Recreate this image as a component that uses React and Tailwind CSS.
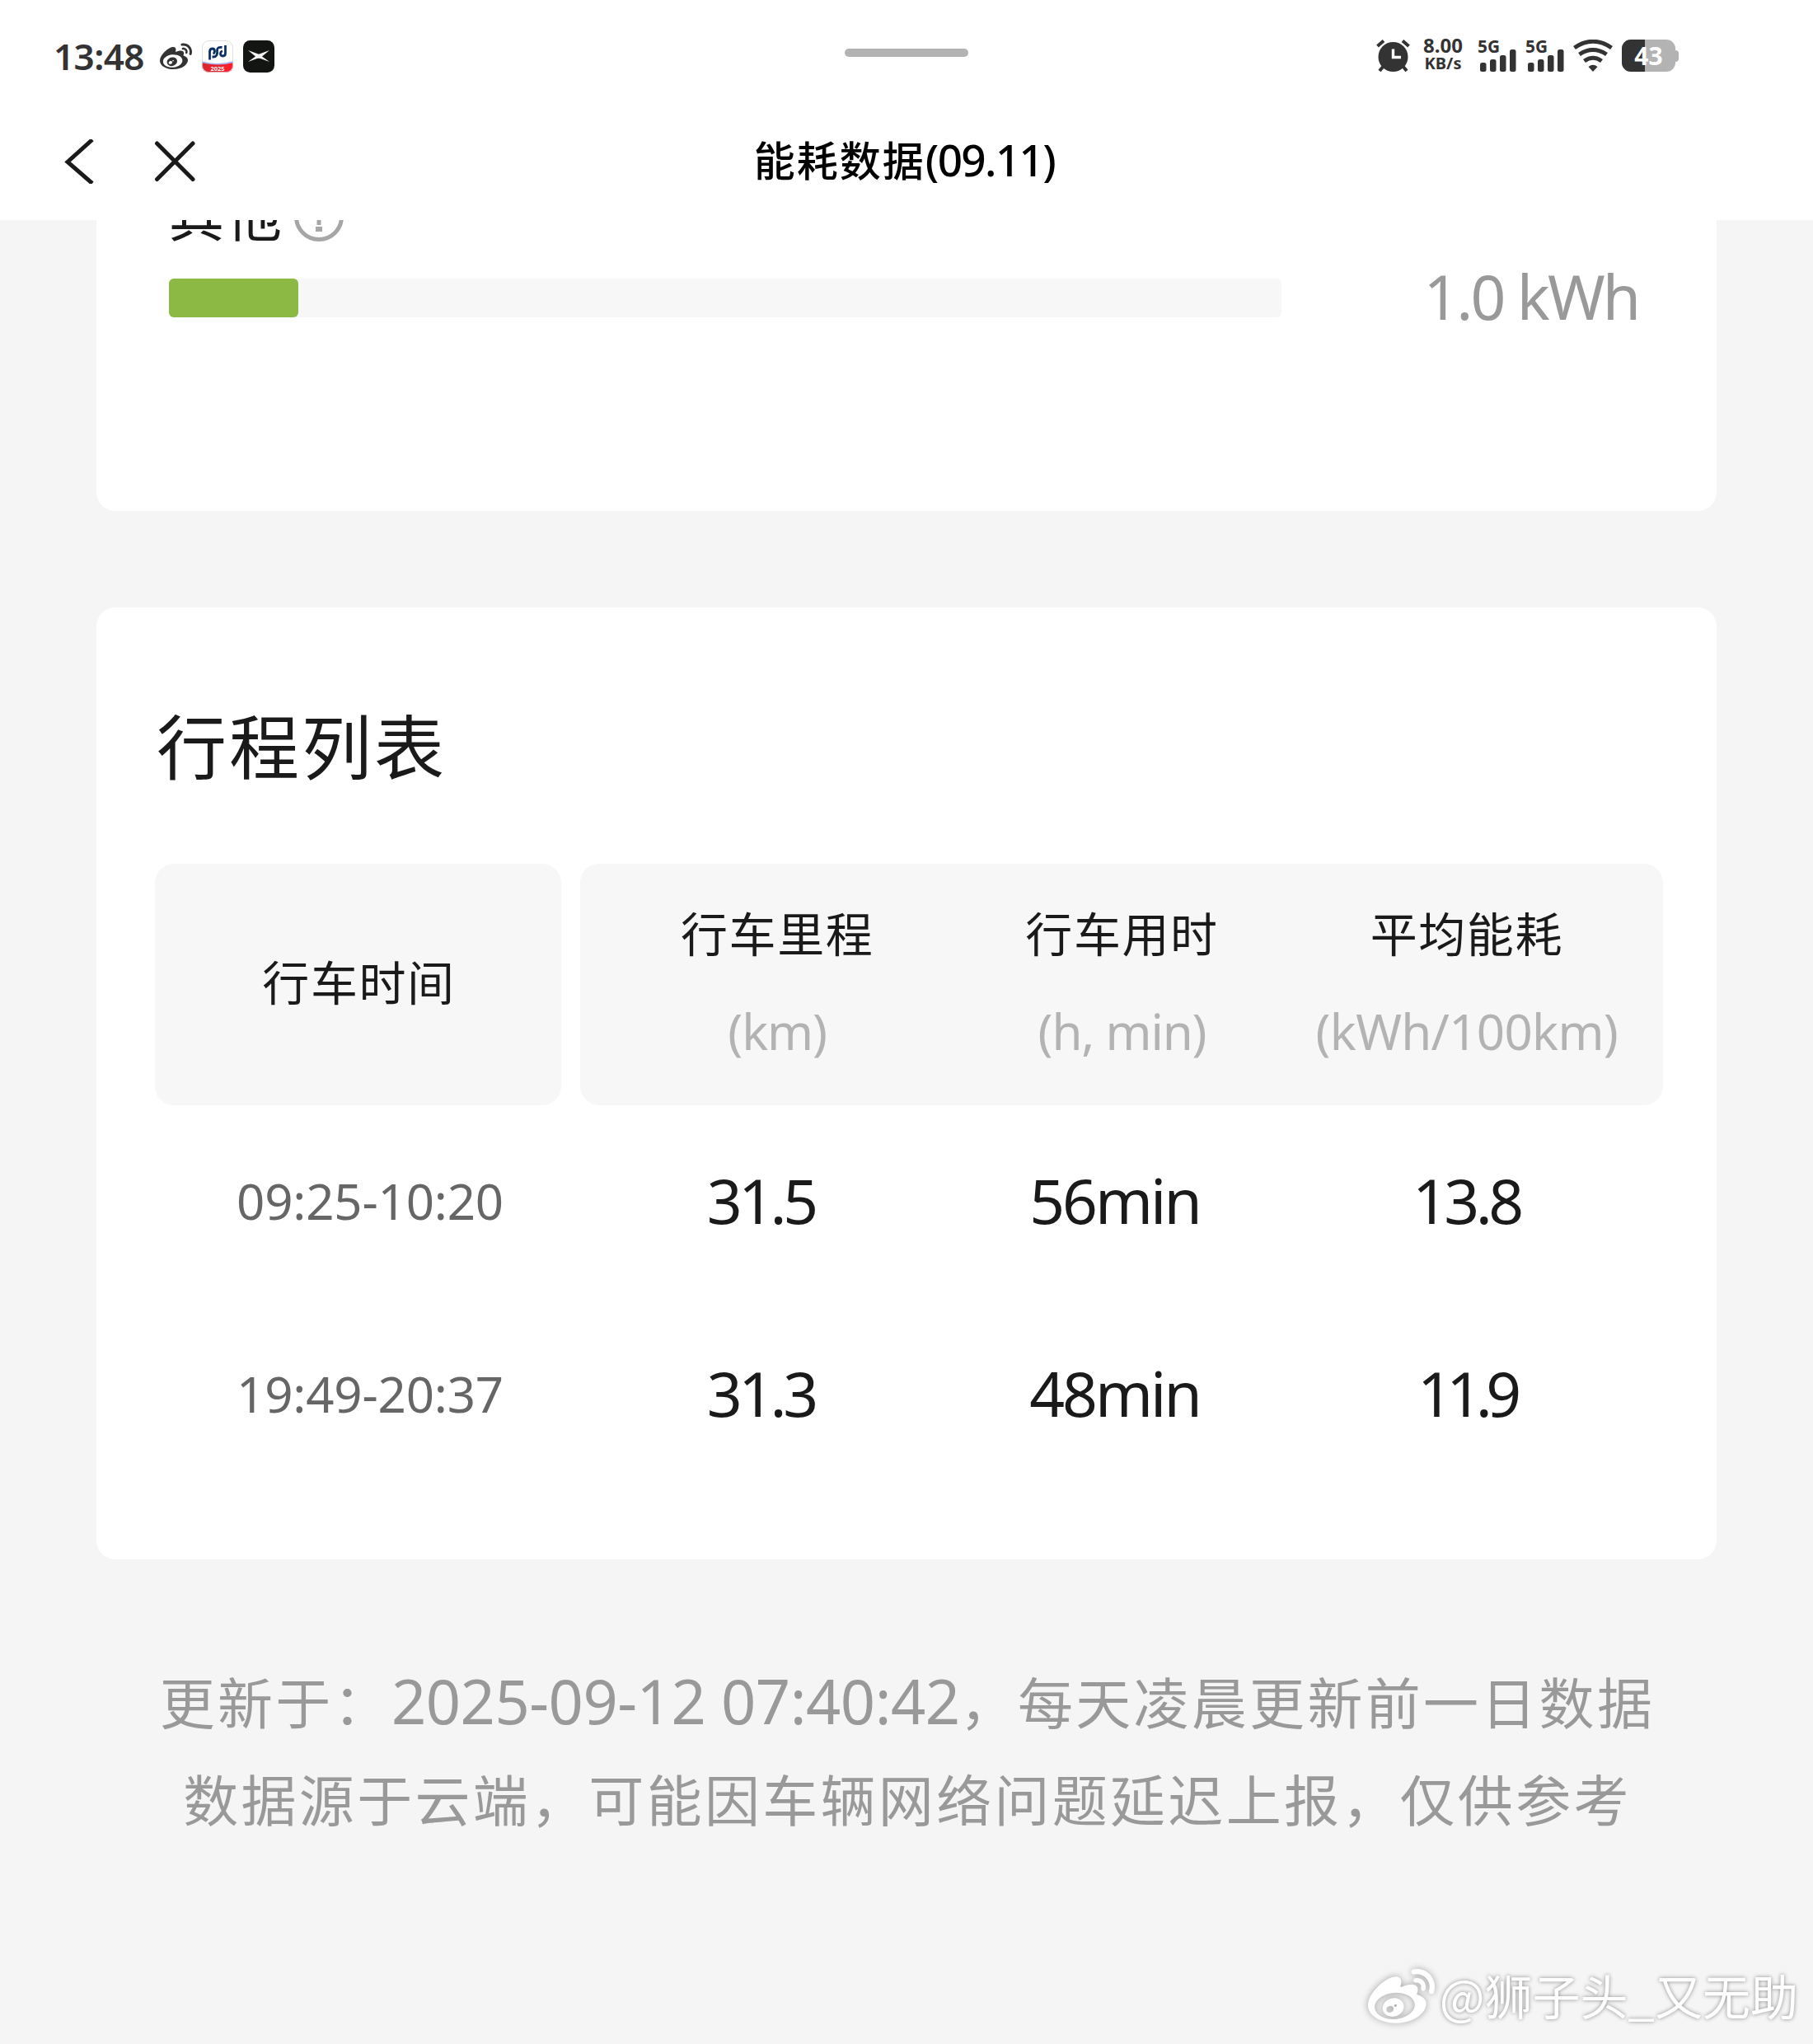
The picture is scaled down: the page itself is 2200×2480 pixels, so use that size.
import React from 'react'
import { FaWeibo } from 'react-icons/fa'

const columns = [
  { name: '行车里程', unit: '(km)', unitClass: 'tracking-[-1.1px]' },
  { name: '行车用时', unit: '(h, min)', unitClass: 'tracking-[-1.2px]' },
  { name: '平均能耗', unit: '(kWh/100km)', unitClass: 'tracking-[-0.7px]' },
]

const trips = [
  { time: '09:25-10:20', distance: '31.5', duration: '56min', average: '13.8', averageClass: 'tracking-[-4.5px]' },
  { time: '19:49-20:37', distance: '31.3', duration: '48min', average: '11.9', averageClass: 'tracking-[-7.5px]' },
]

const other = { value: 157, total: 1350, label: '1.0 kWh' }

function Signal() {
  return (
    <div className="w-[46px] h-[39px]">
      <svg width="46" height="39" viewBox="0 0 46 39" fill="currentColor" className="overflow-visible">
        <text x="-1" y="15.500" fontSize="21.500" fontWeight="700" textLength="27" lengthAdjust="spacingAndGlyphs">5G</text>
        <rect x="2" y="28" width="7.5" height="11" rx="2.5" />
        <rect x="14" y="24" width="7.5" height="15" rx="2.5" />
        <rect x="26" y="19" width="7.5" height="20" rx="2.5" />
        <rect x="38" y="12" width="7.5" height="27" rx="2.5" />
      </svg>
    </div>
  )
}

function Alarm() {
  return (
    <svg width="41" height="39" viewBox="0 0 41 39" fill="none">
      <circle cx="20.5" cy="21" r="18" fill="#333" />
      <path d="M1.500 8 L9 1.500 M39.500 8 L32 1.500" stroke="#333" strokeWidth="4" />
      <path d="M9 32 L4 38 M32 32 L37 38" stroke="#333" strokeWidth="4" />
      <path d="M20.5 11.5 V21.5 H30" stroke="#fff" strokeWidth="3.4" />
    </svg>
  )
}

function Wifi() {
  return (
    <svg width="48" height="39" viewBox="0 0 48 39" fill="none" stroke="#333" strokeWidth="5">
      <path d="M1.5 10 Q24 -5.5 46.500 10" />
      <path d="M7.500 18 Q24 7 40.500 18" />
      <path d="M13.500 26 Q24 18.500 34.500 26" />
      <path d="M18.500 33 Q24 28.500 29.500 33 L24 39 Z" fill="#333" stroke="none" />
    </svg>
  )
}

function Battery() {
  return (
    <div className="flex items-center">
      <div className="relative w-[65px] h-[39px] rounded-[11px] bg-[#b3b3b3] overflow-hidden">
        <div className="w-7 h-full bg-[#333]" />
        <span className="absolute inset-0 text-center text-[30px] leading-[39px] font-bold text-white">43</span>
      </div>
      <div className="w-[4px] h-[14px] rounded-r-[4px] bg-[#b3b3b3]" />
    </div>
  )
}

function StatusBar() {
  return (
    <div className="h-[136px] px-[65px] grid grid-cols-[1fr_150px_1fr] items-start text-[#333]">
      <div className="flex items-center pt-[48px] h-[88px]">
        <span className="w-[129px] text-[44px] leading-[40px] font-semibold tracking-[-0.6px]">13:48</span>
        <FaWeibo size={39} className="mt-[2px]" />
        <svg className="ml-[12px]" width="38" height="39" viewBox="0 0 38 39">
          <defs>
            <linearGradient id="badge" x1="0" y1="0" x2="1" y2="0">
              <stop offset="0" stopColor="#d9262b" />
              <stop offset="1" stopColor="#ff1e2c" />
            </linearGradient>
            <clipPath id="appShape"><rect width="38" height="39" rx="8.500" /></clipPath>
          </defs>
          <g clipPath="url(#appShape)">
            <rect width="38" height="39" fill="#fff" />
            <path d="M0 25 Q19 31 38 25 V32 H0 Z" fill="#a9b4f0" />
            <path d="M0 27 Q19 32 38 27 V39 H0 Z" fill="url(#badge)" />
          </g>
          <rect x="0.500" y="0.500" width="37" height="38" rx="8" fill="none" stroke="#d8d8d8" strokeWidth="0.800" />
          <g fill="none" stroke="#0d3166" strokeWidth="2.800">
            <path d="M9.500 23.500 V14 Q9.500 10 12.500 10 Q15.500 10 15.500 13 Q15.500 15.500 13.500 16" />
            <path d="M24.500 8.500 Q18.500 7.500 18.500 12 Q19.500 20 14 20 H12.500" />
            <path d="M28.500 6 V15.500 Q28.500 19 25.500 19 Q22.500 19 22.500 16 Q22.500 13.500 25 13" />
          </g>
          <text x="19" y="36.500" textAnchor="middle" fontSize="7.500" fontWeight="700" fill="#fff">2025</text>
        </svg>
        <svg className="ml-[12px]" width="38" height="39" viewBox="0 0 38 39">
          <rect width="38" height="39" rx="8.500" fill="#131513" />
          <path d="M6 12 L17 16 Q19 17 21 16 L32 12 L23 19.500 L32 26 L21 22 Q19 21.500 17 22 L6 26 L15 19.500 Z" fill="#f2f2f2" />
        </svg>
      </div>
      <div className="mt-[59px] h-[10px] rounded-full bg-[#b3b3b3]" />
      <div className="flex items-center justify-end pt-[48px] pr-[98px] h-[87px]">
        <Alarm />
        <div className="ml-[13px] w-[54px] text-center font-bold">
          <div className="text-[24px] leading-[20px] -mt-[2px]">8.00</div>
          <div className="text-[20px] leading-[24px]">KB/s</div>
        </div>
        <div className="ml-[16px] flex gap-[12px]">
          <Signal />
          <Signal />
        </div>
        <div className="ml-[11px]"><Wifi /></div>
        <div className="ml-[11px]"><Battery /></div>
      </div>
    </div>
  )
}

function NavBar() {
  return (
    <div className="h-[131px] px-[77px] grid grid-cols-[1fr_auto_1fr] items-start">
      <div className="flex pt-[33px]">
        <svg width="38" height="54" viewBox="0 0 38 54" fill="none" stroke="#1a1a1a" strokeWidth="5">
          <path d="M35 0.500 L5 27.500 L35 53.500" />
        </svg>
        <svg className="ml-[72px]" width="50" height="54" viewBox="0 0 50 54" fill="none" stroke="#1a1a1a" strokeWidth="5" strokeLinecap="round">
          <path d="M3.500 5 L47 48.500 M47 5 L3.500 48.500" />
        </svg>
      </div>
      <h1 className="pt-[21px] pr-[5px] text-[50px] leading-[74px] font-medium text-black tracking-[2px] whitespace-nowrap">
        能耗数据<span className="text-[53px] tracking-[-1.6px]">(09.11)</span>
      </h1>
    </div>
  )
}

function OtherUsage() {
  return (
    <section className="h-[353px] bg-white rounded-b-[23px] px-[88px] overflow-hidden">
      <div className="-mt-[43px] h-[74px] flex items-center">
        <span className="text-[67px] leading-[74px] tracking-[3px] text-[#1a1a1a]">其他</span>
        <svg className="mt-[6px] ml-[12px]" width="60" height="64" viewBox="0 0 60 64" fill="none" stroke="#a6a6a6" strokeWidth="5">
          <circle cx="30" cy="31" r="27.500" />
          <path d="M22 24 Q22 15 30 15 Q38 15 38 23 Q38 28 30 32 V41" />
          <path d="M30 43 V49" strokeWidth="8" />
        </svg>
      </div>
      <div className="mt-[40px] h-[47px] flex items-center justify-between">
        <div className="w-[1350px] h-full rounded-[6px] bg-[#f7f7f7]">
          <div className="h-full rounded-[6px] bg-[#8bb944]" style={{ width: (other.value / other.total) * 100 + '%' }} />
        </div>
        <span className="pr-[7px] pb-[5px] text-[75px] leading-[47px] tracking-[-3px] text-[#999]">{other.label}</span>
      </div>
    </section>
  )
}

function TripList() {
  return (
    <section className="mt-[117px] h-[1155px] bg-white rounded-[23px] pl-[71px] pr-[65px] text-[#1a1a1a]">
      <h2 className="pt-[107px] pl-[2px] text-[85px] leading-[124px] tracking-[3px]">行程列表</h2>
      <div className="mt-[80px] flex gap-[23px]">
        <div className="w-[493px] h-[293px] rounded-[23px] bg-[#f7f7f7] pb-[6px] pl-[2px] flex items-center justify-center text-[57px] leading-[80px] tracking-[1.6px]">
          行车时间
        </div>
        <div className="flex-1 h-[293px] rounded-[23px] bg-[#f7f7f7] pl-[30px] pr-[29px] grid grid-cols-3">
          {columns.map(c => (
            <div key={c.name} className="pt-[26px] text-center whitespace-nowrap">
              <p className="text-[57px] leading-[118px] tracking-[1.6px]">{c.name}</p>
              <p className={`text-[60px] leading-[118px] text-[#b3b3b3] ${c.unitClass}`}>{c.unit}</p>
            </div>
          ))}
        </div>
      </div>
      {trips.map(t => (
        <div key={t.time} className="h-[234px] pb-[3px] flex items-center text-[75px]">
          <span className="w-[522px] text-center text-[60px] tracking-[-0.2px] text-[#666]">{t.time}</span>
          <div className="flex-1 grid grid-cols-3 text-center pr-[20px]">
            <span className="tracking-[-4.5px] pr-[3px]">{t.distance}</span>
            <span className="tracking-[-3px] pr-[3px]">{t.duration}</span>
            <span className={`pr-[8px] ${t.averageClass}`}>{t.average}</span>
          </div>
        </div>
      ))}
    </section>
  )
}

export default function App() {
  return (
    <div className="relative w-[2200px] h-[2480px] overflow-hidden bg-[#f5f5f5] font-['Noto_Sans','Noto_Sans_CJK_SC',sans-serif]">
      <header className="bg-white h-[267px]">
        <StatusBar />
        <NavBar />
      </header>
      <main className="px-[117px]">
        <OtherUsage />
        <TripList />
        <footer className="mt-[115px] pl-[2px] text-center text-[67px] leading-[118px] tracking-[3.3px] text-[#999] whitespace-nowrap">
          <p>更新于：<span className="text-[74px] leading-none tracking-[-0.5px]">2025-09-12 07:40:42</span>，每天凌晨更新前一日数据</p>
          <p>数据源于云端，可能因车辆网络问题延迟上报，仅供参考</p>
        </footer>
      </main>
      {/* 水印 */}
      <div className="absolute right-[18px] bottom-[10px] flex items-center gap-[6px] text-white">
        <FaWeibo size={81} className="drop-shadow-[0_0_4px_rgba(0,0,0,0.35)]" />
        <span className="pb-[8px] text-[58px] leading-[84px] whitespace-nowrap [text-shadow:0_0_5px_rgba(0,0,0,0.45)] font-['Noto_Sans_CJK_SC',sans-serif]">@狮子头_又无助</span>
      </div>
    </div>
  )
}
